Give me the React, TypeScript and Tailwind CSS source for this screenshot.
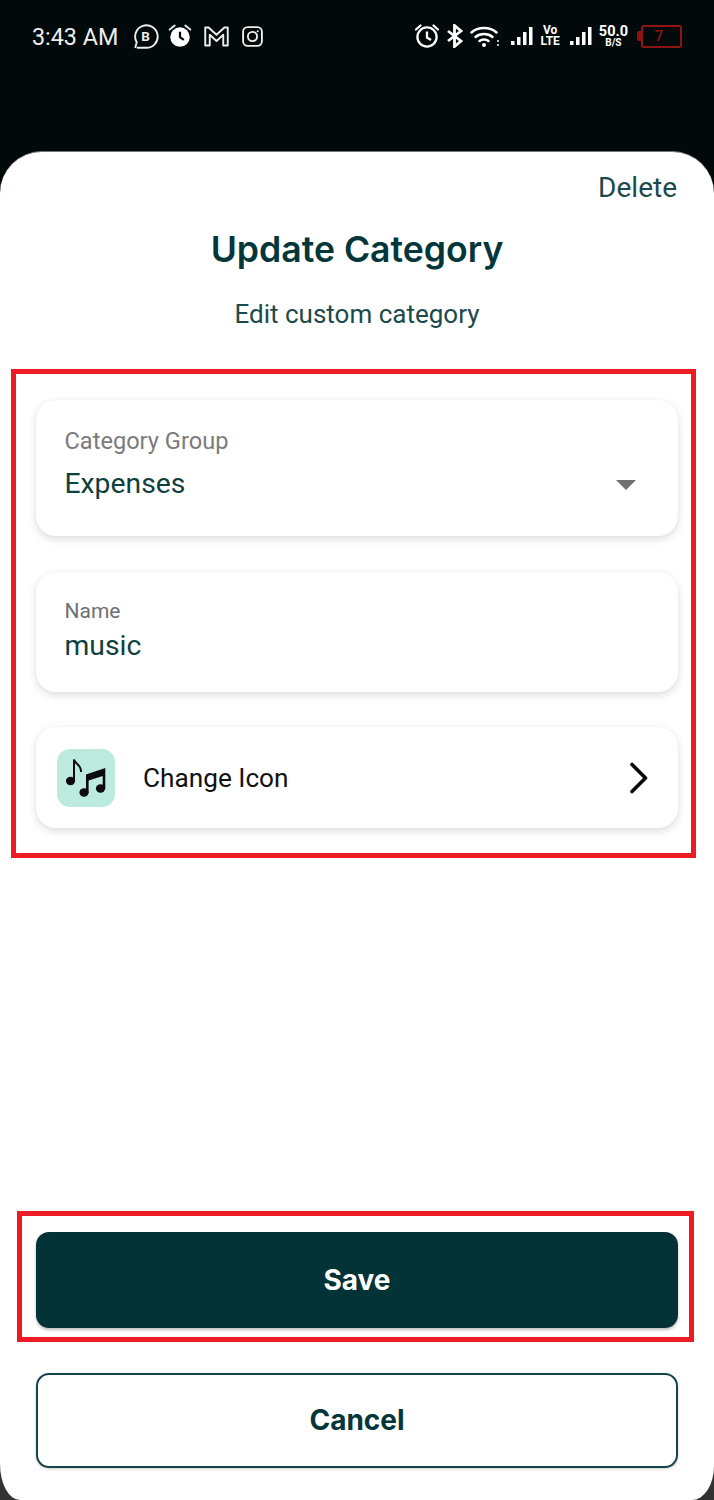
function NotificationIcons() {
  return (
    <div className="flex items-center ml-[14px]">
      <svg width="27" height="27" viewBox="0 0 24 24" fill="none" stroke="#eee" strokeWidth="1.7">
        <path d="M3 21.5l1.2-4.4A10 10 0 1 1 12 22H5" strokeLinecap="round" strokeLinejoin="round" />
        <text x="12" y="16" textAnchor="middle" fontSize="12" fontWeight="700" fill="#eee" stroke="none" fontFamily="Roboto, sans-serif">B</text>
      </svg>
      <svg className="ml-[8px]" width="26" height="26" viewBox="0 0 24 24">
        <circle cx="12" cy="13" r="9" fill="#fff" />
        <path d="M2.5 6L7 2.5M21.5 6L17 2.5" stroke="#ddd" strokeWidth="2" strokeLinecap="round" />
        <path d="M12 8v5l3.5 2.5" stroke="#01090b" strokeWidth="2" fill="none" />
      </svg>
      <svg className="ml-[10px]" width="27" height="25" viewBox="0 0 24 22" fill="none" stroke="#eee" strokeWidth="1.7" strokeLinejoin="round">
        <path d="M2 3h3l7 6.5L19 3h3v16h-4V9.5l-6 5.5-6-5.5V19H2z" />
      </svg>
      <svg className="ml-[11px]" width="23" height="23" viewBox="0 0 22 22" fill="none" stroke="#eee" strokeWidth="1.8">
        <rect x="2" y="2" width="18" height="18" rx="4.5" />
        <circle cx="11" cy="11" r="4.4" />
        <circle cx="16" cy="6" r="1" fill="#eee" stroke="none" />
      </svg>
    </div>
  );
}

function Signal() {
  return (
    <svg width="22" height="22" viewBox="0 0 22 22" fill="#fff">
      <rect x="0" y="16" width="3.5" height="4" />
      <rect x="6" y="12" width="3.5" height="8" />
      <rect x="12" y="7" width="3.5" height="13" />
      <rect x="18" y="2" width="3.5" height="18" />
    </svg>
  );
}

function StatusIcons() {
  return (
    <div className="flex items-center text-white">
      <svg width="26" height="26" viewBox="0 0 26 26" fill="none" stroke="#fff" strokeWidth="2.3">
        <circle cx="13" cy="14" r="9.6" />
        <path d="M13 8.5V14.5l4 2.5" />
        <path d="M2 6.5L6.5 2.5M24 6.5L19.5 2.5" strokeLinecap="round" />
      </svg>
      <svg className="ml-[6px]" width="18" height="24" viewBox="0 0 18 24" fill="none" stroke="#fff" strokeWidth="2.8">
        <path d="M2 7l13 10-6.5 5.5V1.5L15 7 2 17" />
      </svg>
      <svg className="ml-[6px]" width="30" height="24" viewBox="0 0 30 24" fill="none" stroke="#fff" strokeWidth="2.5" strokeLinecap="round">
        <path d="M1.5 8.5C8 2.5 20 2.5 26.5 8.5" />
        <path d="M5.5 13C10 9 18 9 22.5 13" />
        <path d="M9.5 17C12 15 16 15 18.5 17" />
        <circle cx="14" cy="21" r="2" fill="#fff" stroke="none" />
        <circle cx="28" cy="17" r="1" fill="#fff" stroke="none" />
        <circle cx="28" cy="21" r="1" fill="#fff" stroke="none" />
      </svg>
      <div className="ml-[11px]">
        <Signal />
      </div>
      <div className="ml-[7px] flex flex-col items-center text-[12px] leading-[11px] font-bold">
        <span>Vo</span>
        <span>LTE</span>
      </div>
      <div className="ml-[10px]">
        <Signal />
      </div>
      <div className="ml-[7px] flex flex-col items-center font-bold">
        <span className="text-[14.5px] leading-[13px]">50.0</span>
        <span className="text-[10px] leading-[10px]">B/S</span>
      </div>
      <div className="ml-[9px] flex items-center">
        <div className="w-[4px] h-[10px] bg-[#8f1515] rounded-l-[2px]" />
        <div className="w-[41px] h-[23px] border-[2.5px] border-[#8f1515] rounded-[3px] flex items-center justify-center pr-[5px] text-[15px] leading-none text-[#8f1515] font-medium">
          7
        </div>
      </div>
    </div>
  );
}

function MusicIcon() {
  return (
    <svg width="58" height="58" viewBox="0 0 58 58">
      <rect width="58" height="58" rx="13" fill="#bdeadf" />
      <g fill="#0b0b0b">
        <ellipse cx="13.5" cy="32" rx="4.6" ry="4.2" />
        <ellipse cx="27" cy="43.5" rx="4.6" ry="4.2" />
        <ellipse cx="43.5" cy="39.5" rx="4.6" ry="4.2" />
        <path d="M29 44V25.5L48.3 19V40h-2.6V27L31.6 31.5V44z" />
      </g>
      <path d="M17 32V10.5c1 4.5 7.5 5 7 12.5" fill="none" stroke="#0b0b0b" strokeWidth="2" />
    </svg>
  );
}

export default function App() {
  return (
    <div className="w-[714px] h-[1500px] bg-[linear-gradient(#01090b_1400px,#333333_1400px)] flex flex-col overflow-hidden font-['Roboto',sans-serif]">
      <div className="h-[151px] shrink-0 flex items-start justify-between pl-[32px] pr-[32px] pt-[23px]">
        <div className="flex items-center h-[26px]">
          <span className="mt-[3px] text-[23.3px] leading-none text-[#eeeeee]">3:43 AM</span>
          <NotificationIcons />
        </div>
        <StatusIcons />
      </div>

      <div className="flex-1 bg-white rounded-t-[42px] rounded-bl-[20px_36px] rounded-br-[22px_34px] border-t border-[#777] flex flex-col text-[#04363a]">
        <div className="flex justify-end pr-[37px] pt-[19px]">
          <span className="text-[28px] leading-[33px] text-[#1b4a4c]">Delete</span>
        </div>
        <h1 className="mt-[25px] text-center text-[35.6px] leading-[42px] font-semibold font-['Inter',sans-serif] text-[#04363a]">
          Update Category
        </h1>
        <p className="mt-[27px] text-center text-[26px] leading-[32px] text-[#1b4a4c]">Edit custom category</p>

        <div className="mt-[39px] ml-[11px] mr-[18px] h-[489px] border-[5px] border-[#ed1c24] pl-[20px] pr-[13px] pt-[26px] flex flex-col">
          <div className="h-[136px] rounded-[20px] bg-white shadow-[0_3px_8px_rgba(0,0,0,0.14),0_0_2px_rgba(0,0,0,0.04)] flex items-start justify-between pl-[28.5px] pr-[42px] pt-[27px]">
            <div>
              <div className="text-[23.6px] leading-[28px] text-[#7b7b7b]">Category Group</div>
              <div className="mt-[10px] text-[28.3px] leading-[38px] text-[#0f4040]">Expenses</div>
            </div>
            <div className="mt-[53px] w-0 h-0 border-x-[10px] border-x-transparent border-t-[10px] border-t-[#707070]" />
          </div>

          <div className="mt-[36px] h-[120px] rounded-[20px] bg-white shadow-[0_3px_8px_rgba(0,0,0,0.14),0_0_2px_rgba(0,0,0,0.04)] pl-[28.5px] pt-[26px]">
            <div className="text-[21px] leading-[26px] text-[#6f6f6f]">Name</div>
            <div className="mt-[3px] text-[28.3px] leading-[38px] text-[#0f4040]">music</div>
          </div>

          <div className="mt-[35px] h-[101px] rounded-[20px] bg-white shadow-[0_3px_8px_rgba(0,0,0,0.14),0_0_2px_rgba(0,0,0,0.04)] flex items-center pl-[21px] pr-[29px]">
            <MusicIcon />
            <span className="ml-[28px] flex-1 text-[26.2px] leading-[32px] text-[#111111]">Change Icon</span>
            <svg width="20" height="34" viewBox="0 0 20 34" fill="none" stroke="#0a0a0a" strokeWidth="3.6" strokeLinecap="round" strokeLinejoin="round">
              <path d="M3 3.5l13.5 13.5L3 30.5" />
            </svg>
          </div>
        </div>

        <div className="mt-[353px] ml-[17px] mr-[20px] h-[131px] border-[5px] border-[#ed1c24] pl-[14px] pr-[11px] pt-[16px]">
          <button className="w-full h-[96px] rounded-[13px] bg-[#033336] shadow-[0_2px_3px_rgba(0,0,0,0.25)] text-white text-[28px] font-bold font-['Inter',sans-serif]">
            Save
          </button>
        </div>

        <div className="mt-[31px] mx-[36px]">
          <button className="w-full h-[95px] pb-[2px] rounded-[13px] bg-white border-2 border-[#17444a] shadow-[0_1px_3px_rgba(0,0,0,0.2)] text-[#04363a] text-[28px] font-bold font-['Inter',sans-serif]">
            Cancel
          </button>
        </div>
      </div>
    </div>
  );
}
